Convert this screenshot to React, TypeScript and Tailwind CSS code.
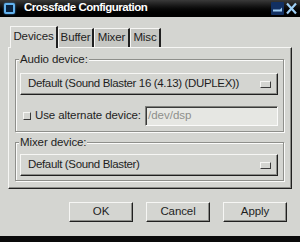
import React from "react";

const raised =
  "border border-t-[#f6f6f4] border-l-[#f6f6f4] border-r-[#202020] border-b-[#202020] shadow-[inset_-1px_-1px_0_#8c8d89]";

const txt = "text-[11.5px] tracking-[-0.1px] whitespace-nowrap text-[#1e1e1e]";

function Dropdown({ text }: { text: string }) {
  return (
    <div className={`h-[22px] flex items-center justify-between pl-[7px] pr-[6px] bg-[#d4d5d1] ${raised}`}>
      <span className="text-[11.5px] tracking-[-0.35px] whitespace-nowrap text-[#1e1e1e] leading-none">{text}</span>
      <div className="w-[11px] h-[7px] border border-t-[#f6f6f4] border-l-[#f6f6f4] border-r-[#3a3a3a] border-b-[#3a3a3a] bg-[#d4d5d1]" />
    </div>
  );
}

function Frame({ label, className, children }: { label: string; className: string; children: React.ReactNode }) {
  return (
    <div className={`relative border border-[#8e8f8b] shadow-[inset_1px_1px_0_#fbfbfa,1px_1px_0_#fbfbfa] ${className}`}>
      <span className={`absolute left-[3px] top-[-8px] px-[1px] bg-[#d4d5d1] leading-[14px] ${txt}`}>
        {label}
      </span>
      {children}
    </div>
  );
}

function Tab({ label, active, w }: { label: string; active?: boolean; w: string }) {
  if (active) {
    return (
      <div
        className={`${w} h-[22px] relative z-10 -mb-[1px] bg-[#d4d5d1] border-l border-t border-l-[#f6f6f4] border-t-[#f6f6f4] border-r-2 border-r-[#202020] flex items-center justify-center ${txt}`}
      >
        <span className="-mt-[1px]">{label}</span>
      </div>
    );
  }
  return (
    <div
      className={`${w} h-[19px] bg-[#c6c7c3] border-l border-t border-l-[#f6f6f4] border-t-[#f6f6f4] border-r-2 border-r-[#202020] flex items-center justify-center ${txt}`}
    >
      <span>{label}</span>
    </div>
  );
}

function Btn({ label }: { label: string }) {
  return (
    <div className={`w-[64px] h-[20px] flex items-center justify-center bg-[#d4d5d1] ${txt} ${raised}`}>
      {label}
    </div>
  );
}

export default function App() {
  return (
    <div className="w-[300px] h-[242px] bg-[#d4d5d1] flex flex-col overflow-hidden font-['Liberation_Sans',Arial,sans-serif]">
      {/* Title bar */}
      <div className="h-[17px] flex items-center bg-gradient-to-b from-[#3a3a3a] via-[#0c0c0c] to-black border-b border-[#000]">
        <div className="ml-[4px] w-[11px] h-[11px] rounded-[2px] border-2 border-[#62b2ee] bg-[#0b2440] shadow-[0_0_2px_#3f8fd0]" />
        <span className="ml-[9px] text-white font-bold text-[11.5px] tracking-[-0.5px] leading-none">
          Crossfade Configuration
        </span>
        <div className="ml-auto mr-[2px] flex items-center gap-[1px]">
          <div className="w-[13px] h-[13px] bg-[#123062] rounded-[1px] flex items-center justify-center">
            <svg width="11" height="11" viewBox="0 0 11 11">
              <path d="M1 6.5 H8 L10 4.5 V8.5 H1 Z" fill="#9ccaf0" />
            </svg>
          </div>
          <div className="w-[13px] h-[13px] flex items-center justify-center">
            <svg width="13" height="13" viewBox="0 0 13 13">
              <path d="M2 1.5 L11 11.5 M11 1.5 L2 11.5" stroke="#9fd0f6" strokeWidth="2.2" />
            </svg>
          </div>
        </div>
      </div>

      {/* Tabs */}
      <div className="mt-[9px] h-[21px] flex items-end pl-[10px]">
        <Tab label="Devices" active w="w-[48px]" />
        <Tab label="Buffer" w="w-[36px]" />
        <Tab label="Mixer" w="w-[36px]" />
        <Tab label="Misc" w="w-[31px]" />
      </div>

      {/* Notebook panel */}
      <div className={`mx-[8px] h-[142px] flex flex-col pl-[6px] pr-[7px] pt-[11px] ${raised}`}>
        <Frame label="Audio device:" className="h-[73px] flex flex-col pl-[4px] pr-[5px] pt-[13px]">
          <Dropdown text="Default (Sound Blaster 16 (4.13) (DUPLEX))" />
          <div className="mt-[11px] h-[20px] flex items-center">
            <div className="ml-[3px] w-[8px] h-[8px] border border-t-[#f6f6f4] border-l-[#f6f6f4] border-r-[#3a3a3a] border-b-[#3a3a3a] bg-[#d4d5d1]" />
            <span className={`ml-[4px] ${txt}`}>Use alternate device:</span>
            <div className="ml-auto w-[133px] h-[20px] flex items-center pl-[2px] bg-[#e6e7e3] border border-t-[#7e7f7b] border-l-[#7e7f7b] border-r-[#fbfbfa] border-b-[#fbfbfa] shadow-[inset_1px_1px_0_#3a3a3a]">
              <span className="text-[11.5px] text-[#8e8f8b]">/dev/dsp</span>
            </div>
          </div>
        </Frame>
        <Frame label="Mixer device:" className="mt-[10px] h-[39px] flex flex-col pl-[4px] pr-[5px] pt-[11px]">
          <Dropdown text="Default (Sound Blaster)" />
        </Frame>
      </div>

      {/* Buttons */}
      <div className="mt-[13px] h-[20px] flex justify-end gap-[13px] pr-[13px]">
        <Btn label="OK" />
        <Btn label="Cancel" />
        <Btn label="Apply" />
      </div>

      <div className="mt-auto h-[6px] bg-[#0a0a0a]" />
    </div>
  );
}
